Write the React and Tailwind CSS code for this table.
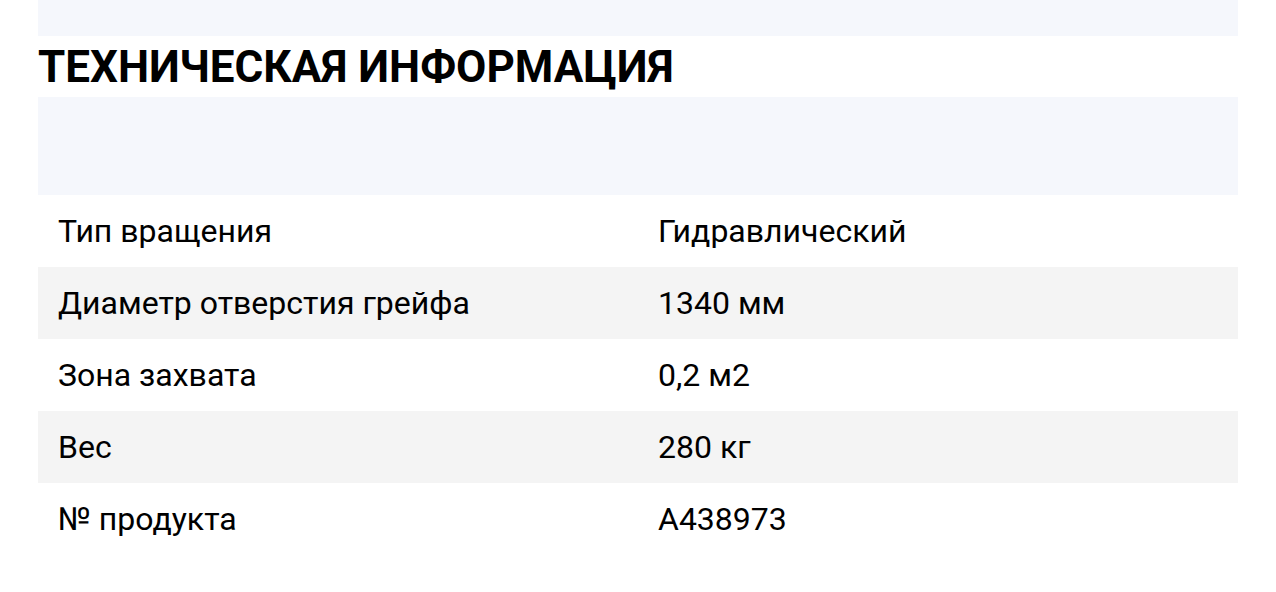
export default function App() {
  const rows = [
    ['Тип вращения', 'Гидравлический'],
    ['Диаметр отверстия грейфа', '1340 мм'],
    ['Зона захвата', '0,2 м2'],
    ['Вес', '280 кг'],
    ['№ продукта', 'A438973'],
  ]

  return (
    <div className="min-h-screen bg-white px-[38px] font-['Roboto',sans-serif] text-black">
      <div className="h-9 bg-[#f5f7fc]"></div>
      <h2 className="h-[61px] flex items-center text-[44px] font-bold leading-none">
        ТЕХНИЧЕСКАЯ ИНФОРМАЦИЯ
      </h2>
      <div className="h-[98px] bg-[#f5f7fc]"></div>
      <div>
        {rows.map(([label, value], i) => (
          <div key={label} className={`grid grid-cols-2 h-[72px] items-center text-[32px] ${i % 2 === 1 ? 'bg-[#f4f4f4]' : 'bg-white'}`}>
            <div className="pl-5">{label}</div>
            <div className="pl-5">{value}</div>
          </div>
        ))}
      </div>
    </div>
  )
}
